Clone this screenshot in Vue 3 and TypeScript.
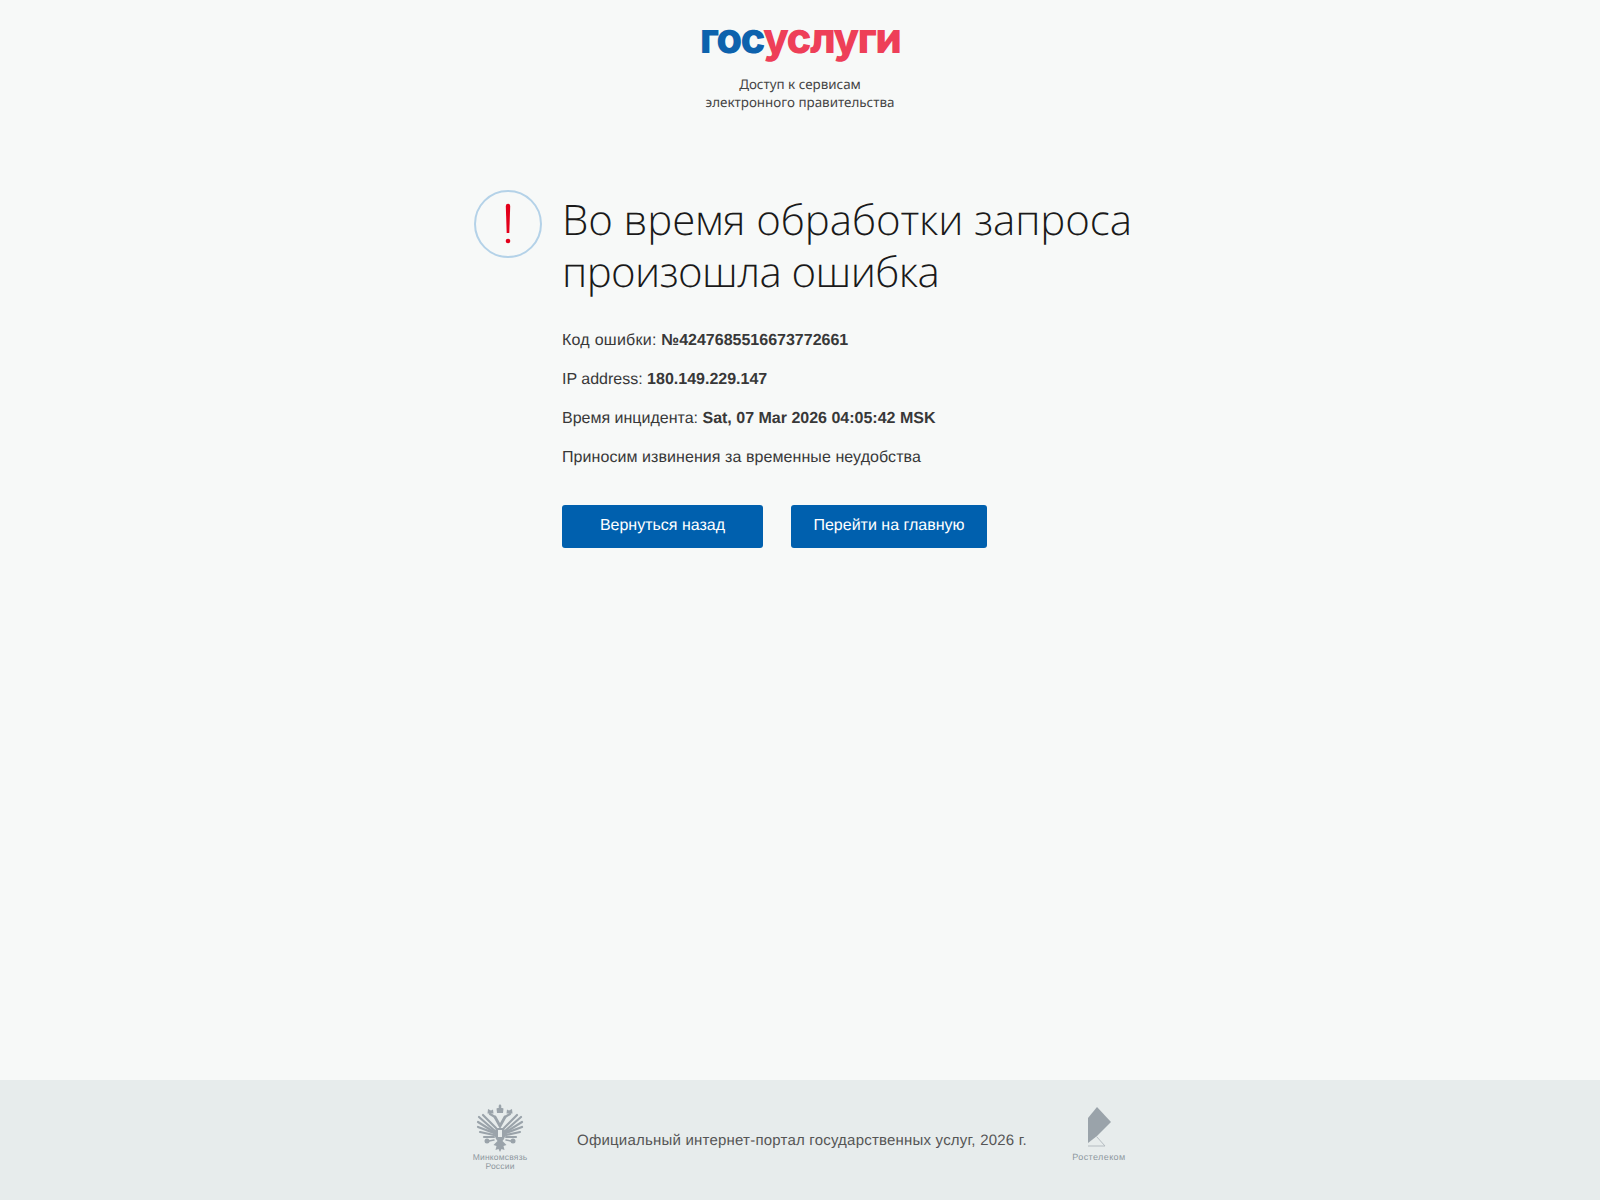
<script setup lang="ts">
const details = [
  { label: "Код ошибки: ", value: "№4247685516673772661", wide: true },
  { label: "IP address: ", value: "180.149.229.147", wide: false },
  { label: "Время инцидента: ", value: "Sat, 07 Mar 2026 04:05:42 MSK", wide: false },
];

// feather strokes of the left wing, the right one is mirrored
const feathers = [
  "M19 27L3 13",
  "M18 28L2 18",
  "M18 29L2 23",
  "M18 31L4 28",
  "M18 33L8 33",
  "M20 24L7 11",
];
</script>

<template>
  <div class="page">
    <header class="header">
      <div class="logo"><span class="blue">гос</span><span class="red">услуги</span></div>
      <p class="tagline">Доступ к сервисам<br />электронного правительства</p>
    </header>

    <main class="content">
      <svg class="alert" width="68" height="68" viewBox="0 0 68 68">
        <circle cx="34" cy="34" r="33" fill="none" stroke="#b4d2e8" stroke-width="2" />
        <path d="M31.800 16a2.200 2.200 0 0 1 4.400 0L35.300 43h-2.600z" fill="#e3001b" />
        <circle cx="34" cy="51" r="2.300" fill="#e3001b" />
      </svg>
      <div class="body">
        <h1>Во время обработки запроса<br /><span class="second">произошла ошибка</span></h1>
        <p v-for="row in details" :key="row.label" class="row">
          <span :class="{ wide: row.wide }">{{ row.label }}</span><b>{{ row.value }}</b>
        </p>
        <p class="row apology">Приносим извинения за временные неудобства</p>
        <div class="actions">
          <a class="btn back">Вернуться назад</a>
          <a class="btn home">Перейти на главную</a>
        </div>
      </div>
    </main>

    <footer class="footer">
      <div class="partner minsvyaz">
        <svg width="48" height="49" viewBox="0 0 48 49">
          <g fill="none" stroke="#9aa3aa" stroke-width="2.200" stroke-linecap="round">
            <path v-for="d in feathers" :key="d" :d="d" />
            <path v-for="d in feathers" :key="'r' + d" :d="d" transform="matrix(-1 0 0 1 48 0)" />
            <path d="M19 13L24 22L29 13" stroke-width="2.800" />
            <path d="M19 13L14 10M29 13L34 10" />
            <path d="M13 37L18 36M35 37L30 36" stroke-width="1.500" />
          </g>
          <g fill="#9aa3aa">
            <path d="M24 0l1.500 2-.6 1.500 2.600 1-.5 4.500h-6l-.5-4.500 2.600-1-.6-1.500z" />
            <path d="M12 5l3 1.500 2-1 .5 4h-6zM36 5l-3 1.500-2-1-.5 4h6z" />
            <path d="M20 24h8l2 6-2 5-1.500 2 4 4-3 1 1 4-3-1-1.500 3-1.500-3-3 1 1-4-3-1 4-4-1.500-2-2-5z" />
            <circle cx="11" cy="37" r="2.500" />
            <circle cx="37" cy="37" r="2.500" />
          </g>
          <rect x="22" y="26" width="4" height="7" fill="#e7ecec" />
        </svg>
        <span>Минкомсвязь<br />России</span>
      </div>
      <p class="copy">Официальный интернет-портал государственных услуг, 2026 г.</p>
      <div class="partner rt">
        <svg width="24" height="40" viewBox="0 0 24 40">
          <path d="M10 0l14 15-14 14-9 7V11z" fill="#9aa3aa" />
          <path d="M9.500 29.500L18 39H1" fill="none" stroke="#b5bcc1" stroke-width="1" />
        </svg>
        <span>Ростелеком</span>
      </div>
    </footer>
  </div>
</template>

<style>
body {
  background: #f7f9f8;
}
</style>

<style scoped>
.page {
  display: flex;
  flex-direction: column;
  min-height: 1200px;
  font-family: "Liberation Sans", Arial, sans-serif;
  text-rendering: geometricPrecision;
  color: #383838;
}

.header {
  display: flex;
  flex-direction: column;
  align-items: center;
  padding-top: 11px;
}

.logo {
  font-family: Inter, sans-serif;
  font-weight: 800;
  font-size: 42px;
  line-height: 56px;
  letter-spacing: -1.7px;
}

.blue {
  color: #0d62ad;
}

.red {
  color: #ee3f58;
}

.tagline {
  margin: 8px 0 0;
  font-family: "Noto Sans", sans-serif;
  font-size: 13.4px;
  line-height: 18px;
  text-align: center;
  color: #444;
}

.content {
  display: flex;
  gap: 20px;
  width: 652px;
  margin: 75px auto 0;
}

.alert {
  flex: none;
  margin-top: 4px;
}

.body {
  flex: 1;
  padding-top: 8px;
}

h1 {
  margin: 0 0 33px;
  font-family: "Open Sans", sans-serif;
  font-weight: 300;
  font-size: 42px;
  line-height: 52px;
  letter-spacing: -0.1px;
  white-space: nowrap;
  color: #1a1a1a;
}

.second {
  letter-spacing: -0.6px;
}

.row {
  margin: 0 0 20px;
  font-size: 16px;
  line-height: 19px;
}

.wide {
  letter-spacing: 0.25px;
}

.apology {
  letter-spacing: 0.07px;
}

.actions {
  display: flex;
  gap: 28px;
  margin-top: 38px;
}

.btn {
  display: block;
  height: 43px;
  line-height: 41px;
  border-radius: 3px;
  background: #0060ae;
  color: #fff;
  font-size: 16px;
  text-align: center;
}

.back {
  width: 201px;
}

.home {
  width: 196px;
}

.footer {
  margin-top: auto;
  height: 120px;
  box-sizing: border-box;
  padding-top: 24px;
  background: #e7ecec;
  display: flex;
  justify-content: center;
  align-items: flex-start;
  gap: 45px;
}

.copy {
  margin: 27px 0 0;
  font-size: 15px;
  line-height: 19px;
  letter-spacing: 0.21px;
  color: #555;
}

.partner {
  display: flex;
  flex-direction: column;
  align-items: center;
  font-size: 8.500px;
  line-height: 9px;
  color: #8d979e;
  text-align: center;
  letter-spacing: 0.2px;
}

.minsvyaz {
  width: 52px;
  margin-right: 6px;
}

.rt {
  width: 54px;
  margin-top: 3px;
}

.rt span {
  margin-top: 6px;
  font-size: 9px;
  letter-spacing: 0.4px;
}
</style>
